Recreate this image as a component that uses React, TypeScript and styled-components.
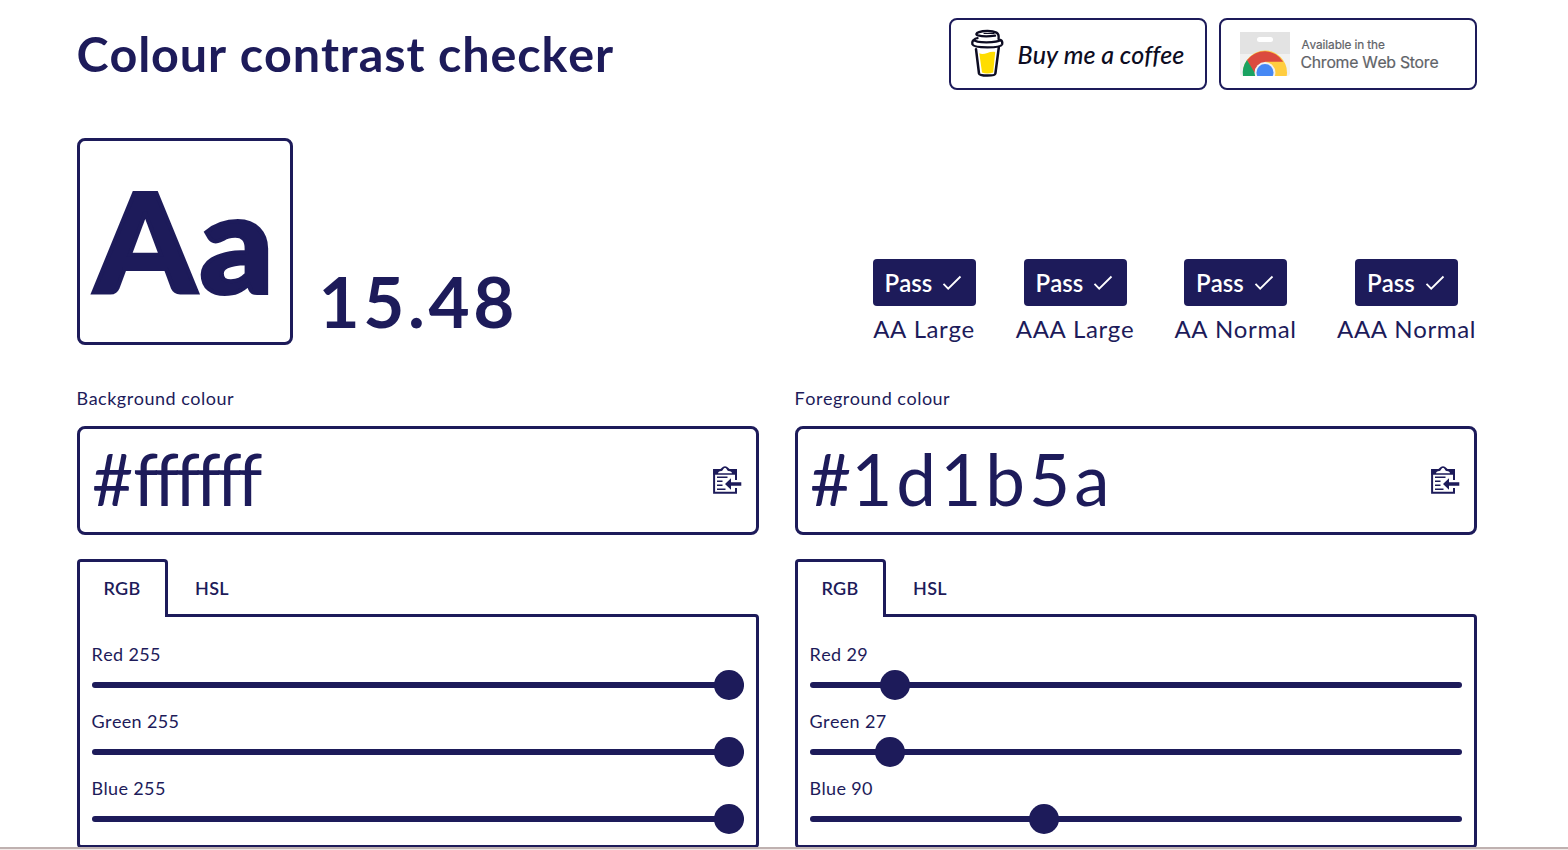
import React, { useState } from "react";
import styled, { createGlobalStyle } from "styled-components";

const INK = "#1d1b5a";

const GlobalStyle = createGlobalStyle`
  * { box-sizing: border-box; }
  html, body { margin: 0; height: 850px; overflow: hidden; }
  body {
    background: #fff;
    color: ${INK};
    font-family: Lato, "Liberation Sans", sans-serif;
    font-variant-ligatures: none;
    font-kerning: none;
  }
`;

const Viewport = styled.div`
  height: 850px;
  display: flex;
  flex-direction: column;
  overflow: hidden;
`;
const Page = styled.main`
  flex: 1;
  min-height: 0;
  overflow: hidden;
  width: 1401px;
  padding-right: 1px;
  margin-left: 76.5px;
  padding-top: 18px;
`;
const BottomEdge = styled.div`
  flex: none;
  height: 3px;
  background: #f1e9e7;
  border-top: 2px solid #bfb1b0;
`;
const Header = styled.header`
  display: flex;
  align-items: center;
  justify-content: space-between;
  height: 72px;
`;
const Title = styled.h1`
  margin: 0;
  padding-bottom: 2px;
  font-size: 48.5px;
  line-height: 70px;
  font-weight: 700;
  letter-spacing: 0.87px;
`;
const Links = styled.div`
  display: flex;
  gap: 12px;
`;
const LinkCard = styled.a`
  display: flex;
  align-items: center;
  width: 258px;
  height: 72px;
  padding-left: 19px;
  border: 2px solid ${INK};
  border-radius: 8px;
  color: inherit;
  text-decoration: none;
`;
const CoffeeText = styled.span`
  margin-left: 12px;
  color: #0d0c22;
  font-size: 25px;
  font-style: italic;
  font-weight: 500;
  letter-spacing: 0;
  white-space: nowrap;
`;
const StoreText = styled.span`
  display: flex;
  flex-direction: column;
  margin-left: 11px;
  color: #5f6368;
  font-family: Inter, sans-serif;
  white-space: nowrap;
`;
const StoreSmall = styled.span`
  padding-left: 1px;
  font-size: 11.8px;
  line-height: 17px;
  letter-spacing: -0.1px;
  -webkit-text-stroke: 0.2px #5f6368;
`;
const StoreLarge = styled.span`
  font-size: 15.8px;
  line-height: 18px;
  letter-spacing: -0.3px;
  -webkit-text-stroke: 0.2px #5f6368;
`;
const Summary = styled.section`
  display: flex;
  align-items: flex-end;
  height: 207px;
  margin-top: 48px;
`;
const Sample = styled.div`
  width: 216px;
  height: 207px;
  border: 3px solid ${INK};
  border-radius: 8px;
  display: flex;
  justify-content: center;
  font-size: 137px;
  font-weight: 900;
  line-height: 199px;
`;
const SampleText = styled.span`
  transform: scaleX(1.05);
  letter-spacing: 4px;
  margin-right: -4px;
  -webkit-text-stroke: 4px ${INK};
`;
const Ratio = styled.div`
  margin-left: 26px;
  padding-bottom: 2px;
  font-size: 71px;
  line-height: 85px;
  font-weight: 700;
  letter-spacing: 3.6px;
`;
const Results = styled.div`
  display: flex;
  gap: 40.5px;
  margin-left: auto;
`;
const Result = styled.div<{ $w: number }>`
  width: ${(p) => p.$w}px;
  display: flex;
  flex-direction: column;
  align-items: center;
`;
const Badge = styled.div`
  display: flex;
  align-items: center;
  justify-content: space-between;
  width: 103px;
  height: 47px;
  padding: 0 13.5px 0 12px;
  border-radius: 4px;
  background: ${INK};
  color: #fff;
  font-size: 24px;
  font-weight: 600;
`;
const ResultLabel = styled.div`
  height: 39px;
  padding-top: 7px;
  font-size: 24px;
  line-height: 32px;
  letter-spacing: 0.6px;
  white-space: nowrap;
`;
const Columns = styled.section`
  display: grid;
  grid-template-columns: 682px 682px;
  column-gap: 36px;
  margin-top: 41px;
`;
const FieldLabel = styled.label`
  display: block;
  font-size: 18px;
  line-height: 24px;
  letter-spacing: 0.5px;
`;
const HexField = styled.div`
  display: flex;
  align-items: center;
  justify-content: space-between;
  height: 109px;
  margin-top: 16px;
  padding: 0 14px 2px 12.5px;
  border: 3px solid ${INK};
  border-radius: 8px;
`;
const HexValue = styled.span`
  padding-bottom: 2px;
  font-size: 71px;
  line-height: 98px;
`;
const HexDigits = styled.span<{ $spacing: number }>`
  letter-spacing: ${(p) => p.$spacing}px;
`;
const PasteButton = styled.button`
  display: flex;
  padding: 0;
  border: 0;
  background: none;
  color: inherit;
`;
const TabRow = styled.div`
  display: flex;
  height: 58px;
  margin-top: 24px;
  margin-bottom: -3px;
  position: relative;
`;
const Tab = styled.button<{ $active: boolean }>`
  width: 91px;
  height: 58px;
  padding: 0 ${(p) => (p.$active ? 0 : 2)}px 4px 0;
  border: 3px solid ${(p) => (p.$active ? INK : "transparent")};
  border-bottom: 0;
  border-radius: 4px 4px 0 0;
  background: ${(p) => (p.$active ? "#fff" : "transparent")};
  color: inherit;
  font: 600 18px/50px Lato, "Liberation Sans", sans-serif;
  letter-spacing: 0.3px;
`;
const Panel = styled.div`
  height: 234px;
  padding: 25px 12px 0;
  border: 3px solid ${INK};
  border-radius: 0 4px 4px 4px;
`;
const Channel = styled.div`
  height: 67px;
`;
const ChannelLabel = styled.div`
  font-size: 18px;
  line-height: 24px;
  height: 28px;
  letter-spacing: 0.35px;
`;
const Slider = styled.input`
  display: block;
  appearance: none;
  width: 652px;
  height: 30px;
  margin: 0;
  background: transparent;
  &::-webkit-slider-runnable-track {
    height: 6px;
    border-radius: 3px;
    background: ${INK};
  }
  &::-webkit-slider-thumb {
    appearance: none;
    width: 30px;
    height: 30px;
    margin-top: -12px;
    border-radius: 50%;
    background: ${INK};
  }
`;

const CoffeeCup = () => (
  <svg width="36" height="50" viewBox="0 0 36 50" fill="none" stroke="#0d0c22" strokeLinecap="round" strokeLinejoin="round">
    <path d="M9.3 24.2C14 27 19 21.5 25.2 23L23.2 43.4Q17 45.4 12 43.4Z" fill="#ffdd00" stroke="none" />
    <path d="M6 20.2L9 44.5Q9.4 46.6 17.3 46.6T25.4 44.5L28.8 18.5" strokeWidth="2.5" />
    <path d="M4 10.8Q1.8 12 2.4 15.4C4 19.3 31 19.5 32.2 15.2Q32.8 11.6 30.3 10.8C27 14 6 14.2 4 10.8ZM4 10.8Q5 9.4 7.5 9.2" strokeWidth="2.3" />
    <path d="M28.6 10C29 6.5 28.8 4.8 26.5 3.6C22 1.6 13.5 1.6 9 3.2C6 4.3 5.6 5.5 8 6.3C13 7.8 20 7.4 25 6.6" strokeWidth="2.4" />
    <path d="M14 4.5H24" strokeWidth="1.1" />
  </svg>
);

const StoreLogo = () => (
  <svg width="50" height="44" viewBox="0 0 50 44">
    <defs><clipPath id="bag"><path d="M0 0H50V41Q50 44 47 44H3Q0 44 0 41Z" /></clipPath></defs>
    <g clipPath="url(#bag)">
      <rect width="50" height="44" fill="#f1f1f1" />
      <rect width="50" height="22" fill="#e3e3e3" />
      <rect x="17" y="5" width="16" height="5" rx="2.5" fill="#fff" />
      <circle cx="25" cy="40.5" r="22" fill="#ffcd40" />
      <path d="M7 28A22 22 0 0 1 43.2 29.7H25L14.7 44Z" fill="#db4a3f" />
      <path d="M7 28A22 22 0 0 0 3 44H15.5L16 43Z" fill="#1aa261" />
      <circle cx="25" cy="40.5" r="10.4" fill="#f1f1f1" />
      <circle cx="25" cy="40.5" r="8.5" fill="#4688f4" />
    </g>
  </svg>
);

const Check = () => (
  <svg width="20" height="20" viewBox="0 0 20 20" fill="none" stroke="#fff" strokeWidth="1.8">
    <path d="M1.5 10.8L6.2 15.7L18.5 3.5" />
  </svg>
);

const Paste = () => (
  <svg width="29" height="30" viewBox="0 0 29 30" fill="none" stroke={INK} strokeWidth="2">
    <path d="M23 15V5H1.1V27.8H23V23" />
    <path d="M1 9V5H7C9.5 5 9 2 12 2S14.5 5 17 5H23V9Z" strokeWidth="1.6" fill={INK} />
    <path d="M5 8.3Q5 6.5 8.5 6C10.5 5.5 10 3 12 3S13.5 5.5 15.5 6Q19 6.5 19 8.3Z" fill="#fff" stroke="none" />
    <path d="M4 12.3H14.5M4 16.3H9.5M4 20.3H9.5M4 24.2H12.5" strokeWidth="1.6" />
    <path d="M12 19L18 13.3V17.2H28.3V20.8H18V24.7Z" fill={INK} stroke="none" />
  </svg>
);

const results = [
  { label: "AA Large", width: 102 },
  { label: "AAA Large", width: 119 },
  { label: "AA Normal", width: 121 },
  { label: "AAA Normal", width: 140 },
];

type PickerProps = { title: string; hex: string; rgb: number[]; spacing: number };

const ColourPicker = ({ title, hex, rgb, spacing }: PickerProps) => {
  const [values, setValues] = useState(rgb);
  return (
    <div>
      <FieldLabel>{title}</FieldLabel>
      <HexField>
        <HexValue>#<HexDigits $spacing={spacing}>{hex}</HexDigits></HexValue>
        <PasteButton aria-label="Paste"><Paste /></PasteButton>
      </HexField>
      <TabRow>
        <Tab $active>RGB</Tab>
        <Tab $active={false}>HSL</Tab>
      </TabRow>
      <Panel>
        {["Red", "Green", "Blue"].map((name, i) => (
          <Channel key={name}>
            <ChannelLabel>{name} {values[i]}</ChannelLabel>
            <Slider
              type="range"
              min={0}
              max={255}
              value={values[i]}
              onChange={(e) => setValues(values.map((v, j) => (j === i ? Number(e.target.value) : v)))}
            />
          </Channel>
        ))}
      </Panel>
    </div>
  );
};

export default function App() {
  return (
    <Viewport>
      <GlobalStyle />
      <Page>
        <Header>
          <Title>Colour contrast checker</Title>
          <Links>
            <LinkCard href="#">
              <CoffeeCup />
              <CoffeeText>Buy me a coffee</CoffeeText>
            </LinkCard>
            <LinkCard href="#">
              <StoreLogo />
              <StoreText>
                <StoreSmall>Available in the</StoreSmall>
                <StoreLarge>Chrome Web Store</StoreLarge>
              </StoreText>
            </LinkCard>
          </Links>
        </Header>
        <Summary>
          <Sample><SampleText>Aa</SampleText></Sample>
          <Ratio>15.48</Ratio>
          <Results>
            {results.map((r) => (
              <Result key={r.label} $w={r.width}>
                <Badge>Pass <Check /></Badge>
                <ResultLabel>{r.label}</ResultLabel>
              </Result>
            ))}
          </Results>
        </Summary>
        <Columns>
          <ColourPicker title="Background colour" hex="ffffff" rgb={[255, 255, 255]} spacing={-4} />
          <ColourPicker title="Foreground colour" hex="1d1b5a" rgb={[29, 27, 90]} spacing={4} />
        </Columns>
      </Page>
      <BottomEdge />
    </Viewport>
  );
}
